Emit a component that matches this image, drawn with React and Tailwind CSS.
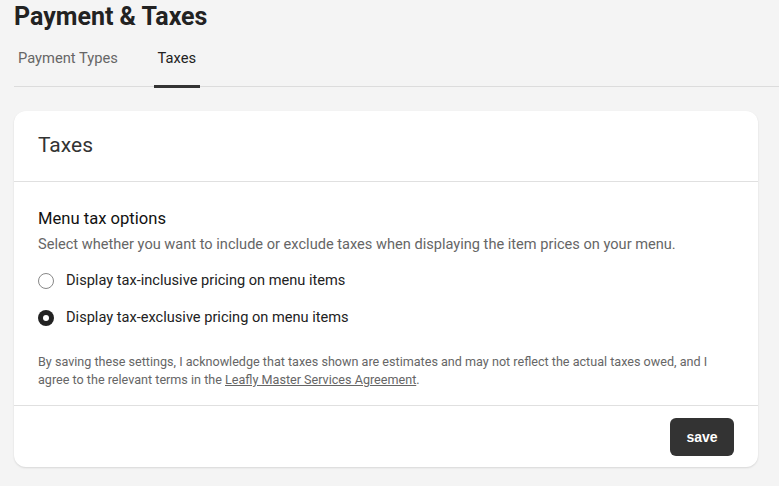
import React from "react";

export default function App() {
  return (
    <div className="min-h-[486px] w-[779px] bg-[#f4f4f4] text-[#222] [font-family:Roboto,'Liberation_Sans',sans-serif] overflow-hidden">
      <div className="pl-[14px]">
        <h1 className="pt-[2px] text-[25px] leading-[30px] font-bold text-[#222]">Payment &amp; Taxes</h1>
        <div className="mt-[16px] flex border-b border-[#dcdcdc] h-[39px]">
          <div className="ml-[4px] text-[14.7px] leading-[20px] text-[#666]">Payment Types</div>
          <div className="ml-[36px] relative w-[46px] text-center text-[14.7px] leading-[20px] text-[#222]">
            Taxes
            <div className="absolute left-0 right-0 bottom-[-2px] h-[3px] bg-[#333]"></div>
          </div>
        </div>
      </div>
      <div className="mx-[14px] mt-[24px] w-[744px] rounded-[12px] bg-white shadow-[0_1px_2px_rgba(0,0,0,0.12)]">
        <div className="h-[71px] border-b border-[#e0e0e0] px-[24px] flex items-center">
          <span className="text-[21px] text-[#333]">Taxes</span>
        </div>
        <div className="px-[24px] pt-[26px] pb-[16px] border-b border-[#e0e0e0]">
          <div className="text-[16.6px] leading-[22px] text-[#111]">Menu tax options</div>
          <div className="mt-[4px] text-[14.6px] leading-[20px] text-[#666]">
            Select whether you want to include or exclude taxes when displaying the item prices on your menu.
          </div>
          <div className="mt-[17px] flex items-center h-[20px]">
            <span className="w-[16px] h-[16px] rounded-full border border-[#888] bg-white"></span>
            <span className="ml-[12px] text-[14.6px] text-[#222]">Display tax-inclusive pricing on menu items</span>
          </div>
          <div className="mt-[17px] flex items-center h-[20px]">
            <span className="w-[16px] h-[16px] rounded-full bg-[#222] flex items-center justify-center">
              <span className="w-[6px] h-[6px] rounded-full bg-white"></span>
            </span>
            <span className="ml-[12px] text-[14.6px] text-[#222]">Display tax-exclusive pricing on menu items</span>
          </div>
          <p className="mt-[25px] max-w-[672px] text-[12.6px] leading-[18px] text-[#666]">
            By saving these settings, I acknowledge that taxes shown are estimates and may not reflect the actual taxes owed, and I agree to the relevant terms in the{" "}
            <span className="underline">Leafly Master Services Agreement</span>.
          </p>
        </div>
        <div className="flex justify-end px-[24px] pt-[12px] pb-[11px]">
          <button className="w-[64px] h-[38px] rounded-[6px] bg-[#333] text-white text-[14px] font-bold [font-family:'Liberation_Sans',Arial,sans-serif]">save</button>
        </div>
      </div>
    </div>
  );
}
